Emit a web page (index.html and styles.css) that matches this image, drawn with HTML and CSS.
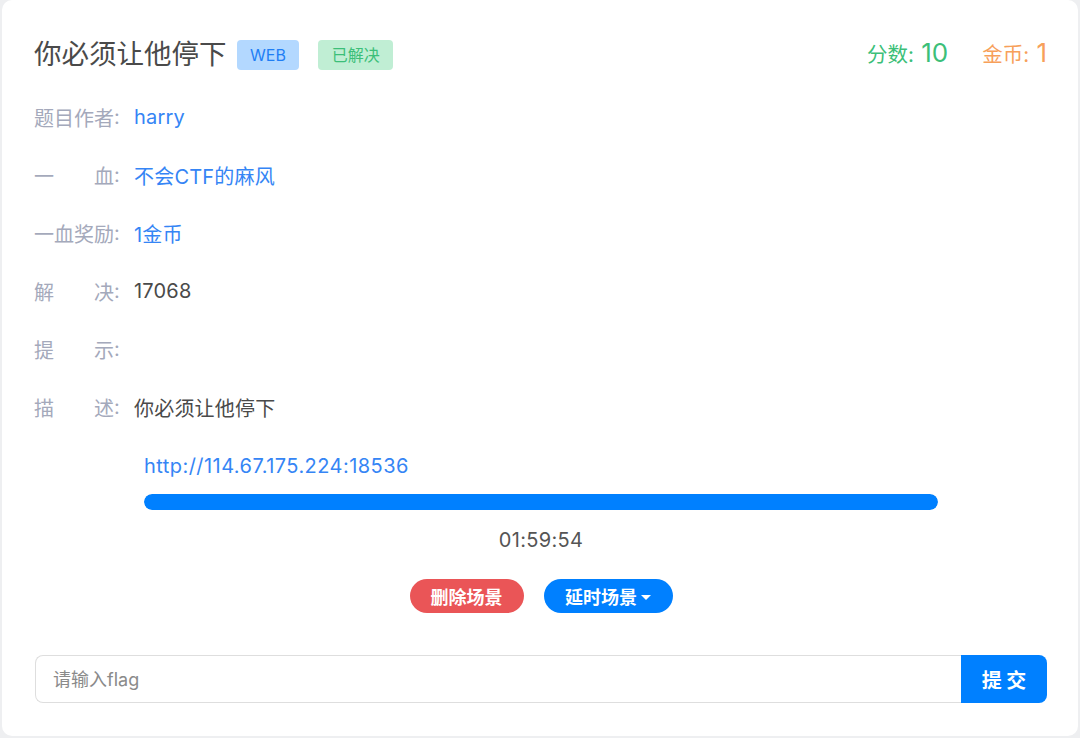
FILE: index.html
```html
<!DOCTYPE html>
<html>
  <head>
    <meta charset="UTF-8">
    <meta name=viewport content="width=device-width, initial-scale=1">
    <link rel="stylesheet" href="styles.css">
  </head>
  <body>
    <div class="card">
      <div class="card-head">
        <div class="title">你必须让他停下</div>
        <span class="tag tag-web">WEB</span>
        <span class="tag tag-solved">已解决</span>
        <div class="score">
          <span class="points"><span class="score-label">分数:</span> 10</span>
          <span class="coins"><span class="score-label">金币:</span> 1</span>
        </div>
      </div>

      <div class="info">
        <div class="row"><span class="key">题目作者</span><span class="colon">:</span><span class="val link">harry</span></div>
        <div class="row"><span class="key">一血</span><span class="colon">:</span><span class="val link">不会CTF的麻风</span></div>
        <div class="row"><span class="key">一血奖励</span><span class="colon">:</span><span class="val link">1金币</span></div>
        <div class="row"><span class="key">解决</span><span class="colon">:</span><span class="val">17068</span></div>
        <div class="row"><span class="key">提示</span><span class="colon">:</span><span class="val"></span></div>
        <div class="row"><span class="key">描述</span><span class="colon">:</span><span class="val">你必须让他停下</span></div>
      </div>

      <div class="scene">
        <a class="scene-url" href="#">http://114.67.175.224:18536</a>
        <div class="progress"><div class="progress-bar" style="width: 100%"></div></div>
        <div class="timer">01:59:54</div>
      </div>

      <div class="actions">
        <button class="pill pill-red">删除场景</button>
        <button class="pill pill-blue">延时场景<span class="caret"></span></button>
      </div>

      <div class="flag-form">
        <input type="text" placeholder="请输入flag">
        <button class="submit">提 交</button>
      </div>
    </div>
  </body>
</html>
```

FILE: styles.css
```css
body {
  margin: 0;
  padding: 0 2px 2px 2px;
  background-color: #eeeff1;
  font-family: "Inter", "Noto Sans CJK SC", sans-serif;
  color: #4a4a4a;
}

.card {
  background-color: #fff;
  border-radius: 10px;
  padding: 24px 31px 32px 33px;
  height: 680px;
}

.card-head, .info {
  margin-left: -1px;
}

.card-head {
  display: flex;
  align-items: center;
  height: 56px;
  margin-bottom: 8px;
}

.title {
  font-size: 27.5px;
  color: #4a4a4a;
  margin-right: 10px;
}

.tag {
  display: inline-block;
  font-size: 16px;
  line-height: 30px;
  height: 30px;
  padding: 0 13.5px;
  border-radius: 4px;
  margin-top: 6px;
}

.tag-web {
  background-color: #b3d8ff;
  color: #1f7ef5;
  margin-right: 19px;
}

.tag-solved {
  background-color: #c0eed4;
  color: #3cbf79;
}

.score {
  margin-left: auto;
  display: flex;
  align-items: baseline;
  gap: 34px;
  font-size: 26px;
}

.score-label {
  font-size: 20.5px;
}

.points {
  color: #3cbf79;
}

.coins {
  color: #f7a05a;
}

.row {
  display: flex;
  align-items: center;
  height: 58px;
  font-size: 20px;
}

.key {
  width: 80px;
  text-align: justify;
  text-align-last: justify;
  color: #a4a9bb;
}

.colon {
  color: #a4a9bb;
  width: 20px;
}

.val {
  color: #4a4a4a;
  letter-spacing: 0.2px;
}

.link {
  color: #3585f5;
}

.scene {
  width: 794px;
  margin: 15px auto 0 auto;
}

.scene-url {
  display: block;
  font-size: 20px;
  letter-spacing: 0.45px;
  line-height: 30px;
  color: #3585f5;
  text-decoration: none;
}

.progress {
  margin-top: 13px;
  height: 16px;
  background-color: #e9ecef;
  border-radius: 8px;
  overflow: hidden;
}

.progress-bar {
  height: 100%;
  background-color: #0080ff;
  border-radius: 8px;
}

.timer {
  margin-top: 15px;
  line-height: 30px;
  text-align: center;
  font-size: 20px;
  letter-spacing: 0.3px;
  color: #555;
}

.actions {
  display: flex;
  justify-content: center;
  gap: 20px;
  margin-top: 24px;
}

.pill {
  height: 34px;
  border: none;
  border-radius: 17px;
  color: #fff;
  font-family: inherit;
  font-size: 18px;
  font-weight: bold;
  padding: 0;
}

.pill-red {
  background-color: #ea5557;
  width: 114px;
}

.pill-blue {
  background-color: #0080ff;
  width: 129px;
}

.caret {
  display: inline-block;
  margin-left: 4px;
  vertical-align: 4px;
  border-left: 5px solid transparent;
  border-right: 5px solid transparent;
  border-top: 5px solid #fff;
}

.flag-form {
  display: flex;
  margin-top: 42px;
  height: 48px;
}

.flag-form input {
  flex-grow: 1;
  border: 1px solid #dedede;
  border-right: none;
  border-radius: 8px 0 0 8px;
  padding: 0 17px;
  font-family: inherit;
  font-size: 18px;
  color: #4a4a4a;
  outline: none;
}

.flag-form input::placeholder {
  color: #8a8a8a;
}

.submit {
  width: 86px;
  border: none;
  border-radius: 0 8px 8px 0;
  background-color: #0080ff;
  color: #fff;
  font-family: inherit;
  font-size: 20px;
  font-weight: bold;
}
```
